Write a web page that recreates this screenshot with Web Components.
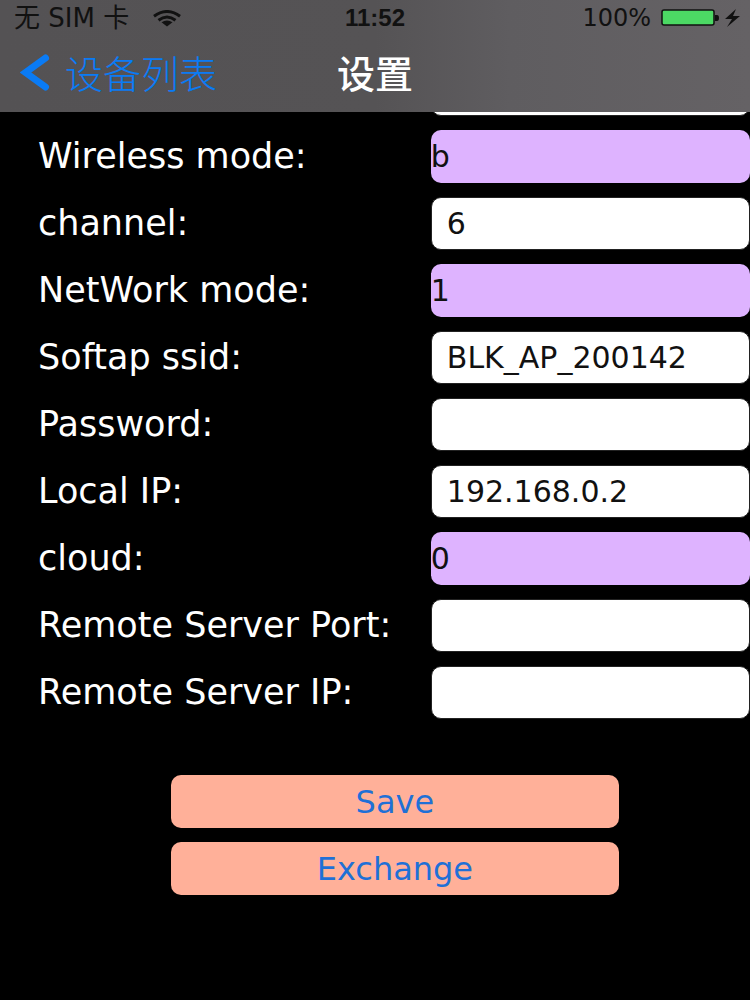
<!DOCTYPE html>
<html lang="zh-CN">
<head>
<meta charset="utf-8">
<meta name="viewport" content="width=device-width, initial-scale=1">
<title>设置</title>
<style>
  body {
    margin: 0;
    min-height: 100vh;
    background: #000;
    color: #fff;
    font-family: "DejaVu Sans", "Noto Sans CJK SC", sans-serif;
  }
</style>
</head>
<body>
<settings-page>
  <top-bar slot="header">
    <status-bar slot="status">
      <span slot="carrier">无 SIM 卡</span>
      <span slot="time">11:52</span>
      <span slot="battery">100%</span>
    </status-bar>
    <span slot="back">设备列表</span>
    <span slot="title">设置</span>
  </top-bar>
  <setting-row name="Wireless ssid"></setting-row>
  <setting-row type="select" value="b">Wireless mode:</setting-row>
  <setting-row value="6">channel:</setting-row>
  <setting-row type="select" value="1">NetWork mode:</setting-row>
  <setting-row value="BLK_AP_200142">Softap ssid:</setting-row>
  <setting-row>Password:</setting-row>
  <setting-row value="192.168.0.2">Local IP:</setting-row>
  <setting-row type="select" value="0">cloud:</setting-row>
  <setting-row>Remote Server Port:</setting-row>
  <setting-row>Remote Server IP:</setting-row>
  <action-button slot="actions">Save</action-button>
  <action-button slot="actions">Exchange</action-button>
</settings-page>

<script>
class SettingsPage extends HTMLElement {
  constructor() {
    super();
    this.shadowDOM = this.attachShadow({ mode: "open" });
    this.render();
  }

  render() {
    this.shadowDOM.innerHTML = `<style>
    :host {
      display: block;
    }

    header {
      position: sticky;
      top: 0;
      z-index: 1;
    }

    /* the first row is scrolled under the header */
    .rows {
      display: grid;
      gap: 14px;
      margin-top: -49px;
    }

    .actions {
      display: grid;
      gap: 14px;
      padding: 56px 17.5% 56px 22.8%;
    }
    </style>
    <header><slot name="header"></slot></header>
    <main>
      <div class="rows"><slot></slot></div>
      <div class="actions"><slot name="actions"></slot></div>
    </main>
    `;
  }
}

class TopBar extends HTMLElement {
  constructor() {
    super();
    this.shadowDOM = this.attachShadow({ mode: "open" });
    this.render();
  }

  render() {
    this.shadowDOM.innerHTML = `<style>
    :host {
      display: block;
      background: linear-gradient(90deg, #545254 0%, #555355 50%, #5f5d60 68%, #656265 100%);
    }

    nav {
      display: grid;
      grid-template-columns: 1fr auto 1fr;
      align-items: center;
      padding: 12px 20px 16px;
      font-family: "Noto Sans CJK SC", sans-serif;
      font-size: 38px;
      line-height: 48px;
    }

    a {
      display: flex;
      align-items: center;
      gap: 15px;
      color: #0a7bf5;
      font-weight: 300;
      text-decoration: none;
    }

    .title {
      font-weight: 500;
    }
    </style>
    <slot name="status"></slot>
    <nav>
      <a href="#">
        <svg width="30" height="37" viewBox="0 0 30 37" fill="none" stroke="currentColor" stroke-width="7" stroke-linecap="round" stroke-linejoin="miter"><path d="M25.500 4 5.500 18.500 25.500 33"/></svg>
        <slot name="back"></slot>
      </a>
      <span class="title"><slot name="title"></slot></span>
    </nav>
    `;
  }
}

class StatusBar extends HTMLElement {
  constructor() {
    super();
    this.shadowDOM = this.attachShadow({ mode: "open" });
    this.render();
  }

  render() {
    this.shadowDOM.innerHTML = `<style>
    :host {
      display: grid;
      grid-template-columns: 1fr auto 1fr;
      align-items: center;
      height: 36px;
      padding: 0 10px;
      color: #111;
      font-size: 24px;
      line-height: 36px;
    }

    div {
      display: flex;
      align-items: center;
      gap: 10px;
    }

    .carrier {
      gap: 24px;
      padding-left: 4px;
      font-size: 26px;
    }

    .battery {
      justify-content: flex-end;
    }

    .time {
      font-family: "Liberation Sans", sans-serif;
      font-weight: 700;
    }
    </style>
    <div class="carrier">
      <slot name="carrier"></slot>
      <svg width="28" height="17" viewBox="0 0 28 17" fill="none" stroke="currentColor" stroke-width="3"><path d="M1 6.200Q14-3.200 27 6.200M5.500 10.200Q14 3.800 22.500 10.200"/><path d="M8.500 12.300Q14 8.500 19.500 12.300L14 16.500Z" fill="currentColor" stroke="none"/></svg>
    </div>
    <div class="time"><slot name="time"></slot></div>
    <div class="battery">
      <slot name="battery"></slot>
      <svg width="79" height="18" viewBox="0 0 79 18">
        <rect x="1" y="1" width="52" height="15" rx="2" fill="#4cd964" stroke="currentColor" stroke-width="1.500"/>
        <path d="M54 6h2q2 0 2 3t-2 3h-2z" fill="currentColor"/>
        <path d="M75 0 64 10h7l-5 8L79 7h-7z" fill="currentColor"/>
      </svg>
    </div>
    `;
  }
}

class SettingRow extends HTMLElement {
  constructor() {
    super();
    this.shadowDOM = this.attachShadow({ mode: "open" });
    this.render();
  }

  control() {
    const value = this.getAttribute("value") || "";
    const name = this.getAttribute("name");
    const aria = name ? `aria-label="${name}"` : "";
    if (this.getAttribute("type") === "select") {
      return `<select id="field" ${aria}><option>${value}</option></select>`;
    }
    return `<input id="field" type="text" value="${value}" ${aria}>`;
  }

  render() {
    this.shadowDOM.innerHTML = `<style>
    :host {
      display: grid;
      grid-template-columns: 16fr 13fr;
      align-items: center;
      padding-left: 38px;
    }

    label {
      font-size: 35px;
      line-height: 46px;
      padding-bottom: 2px;
      white-space: nowrap;
    }

    input,
    select {
      box-sizing: border-box;
      width: 100%;
      min-width: 0;
      height: 53px;
      margin: 0;
      border: 0;
      border-radius: 10px;
      color: #111;
      font-family: inherit;
      font-size: 30px;
      outline: none;
    }

    input {
      padding: 0 15px;
      border: 1px solid #222;
      background: #fff;
    }

    select {
      appearance: none;
      padding: 0;
      background: #deb3ff;
    }
    </style>
    <label for="field"><slot></slot></label>
    ${this.control()}
    `;
  }
}

class ActionButton extends HTMLElement {
  constructor() {
    super();
    this.shadowDOM = this.attachShadow({ mode: "open" });
    this.render();
  }

  render() {
    this.shadowDOM.innerHTML = `<style>
    :host {
      display: block;
    }

    button {
      display: block;
      width: 100%;
      height: 53px;
      padding: 0;
      border: 0;
      border-radius: 10px;
      background: #ffb099;
      color: #1f70d6;
      font-family: inherit;
      font-size: 32px;
      cursor: pointer;
    }
    </style>
    <button type="button"><slot></slot></button>
    `;
  }
}

customElements.define("settings-page", SettingsPage);
customElements.define("top-bar", TopBar);
customElements.define("status-bar", StatusBar);
customElements.define("setting-row", SettingRow);
customElements.define("action-button", ActionButton);
</script>
</body>
</html>
